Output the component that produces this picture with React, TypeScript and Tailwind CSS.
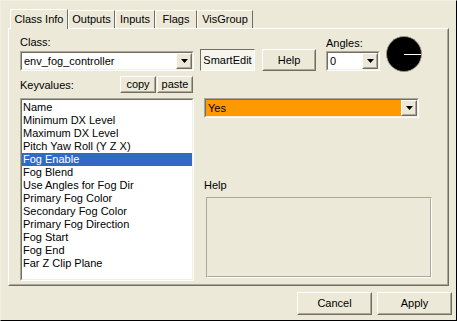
import React from "react";

const keyvalues = [
  "Name",
  "Minimum DX Level",
  "Maximum DX Level",
  "Pitch Yaw Roll (Y Z X)",
  "Fog Enable",
  "Fog Blend",
  "Use Angles for Fog Dir",
  "Primary Fog Color",
  "Secondary Fog Color",
  "Primary Fog Direction",
  "Fog Start",
  "Fog End",
  "Far Z Clip Plane",
];

const tabs = [
  { label: "Class Info", w: "w-[58px]" },
  { label: "Outputs", w: "w-[47px]" },
  { label: "Inputs", w: "w-[40px]" },
  { label: "Flags", w: "w-[42px]" },
  { label: "VisGroup", w: "w-[56px]" },
];

// classic raised 3d button
const Raised = ({
  className,
  children,
}: {
  className?: string;
  children?: React.ReactNode;
}) => (
  <div
    className={
      "border border-t-white border-l-white border-r-[#716F64] border-b-[#716F64] bg-[#ECE9D8] " +
      (className || "")
    }
  >
    <div className="w-full h-full flex items-center justify-center border border-t-[#ECE9D8] border-l-[#ECE9D8] border-r-[#ACA899] border-b-[#ACA899]">
      {children}
    </div>
  </div>
);

const Sunken = ({
  className,
  children,
}: {
  className?: string;
  children?: React.ReactNode;
}) => (
  <div
    className={
      "border border-t-[#ACA899] border-l-[#ACA899] border-r-white border-b-white " +
      (className || "")
    }
  >
    <div className="w-full h-full border border-t-[#716F64] border-l-[#716F64] border-r-[#F1EFE2] border-b-[#F1EFE2]">
      {children}
    </div>
  </div>
);

const Arrow = () => (
  <Raised className="w-[16px] h-[16px] shrink-0">
    <svg width="7" height="4" viewBox="0 0 7 4">
      <path d="M0 0h7L3.5 4z" fill="#000" />
    </svg>
  </Raised>
);

const Combo = ({
  value,
  className,
  bg,
}: {
  value: string;
  className?: string;
  bg?: string;
}) => (
  <Sunken className={className}>
    <div className={"flex h-full items-center " + (bg || "bg-white")}>
      <span className="flex-1 pl-[2px] leading-none">{value}</span>
      <Arrow />
    </div>
  </Sunken>
);

export default function App() {
  return (
    <div
      className="w-[457px] h-[321px] bg-[#ECE9D8] text-[11px] text-black border-r border-b border-r-black border-b-black border-t border-l border-t-[#F1EFE2] border-l-[#F1EFE2] overflow-hidden"
      style={{ fontFamily: '"Liberation Sans", Arial, sans-serif' }}
    >
      {/* tab strip */}
      <div className="flex items-end pl-[9px] pt-[7px] h-[27px]">
        {tabs.map((t, i) =>
          i === 0 ? (
            <div
              key={t.label}
              className={
                t.w +
                " h-[20px] flex items-center justify-center border-t border-l border-r border-t-white border-l-white border-r-[#716F64] bg-[#ECE9D8] relative z-10 -mb-[1px]"
              }
            >
              {t.label}
            </div>
          ) : (
            <div
              key={t.label}
              className={
                t.w +
                " h-[18px] flex items-center justify-center border-t border-l border-r border-t-white border-l-white border-r-[#716F64]"
              }
            >
              {t.label}
            </div>
          )
        )}
      </div>

      {/* tab panel */}
      <div className="mx-[7px] h-[258px] border border-t-white border-l-white border-r-[#716F64] border-b-[#716F64]">
        <div className="h-full border border-transparent border-r-[#ACA899] border-b-[#ACA899] pl-[10px] pt-[4px]">
          <div className="grid grid-cols-[174px_1fr] grid-rows-[37px_auto] gap-x-[6px]">
            {/* class */}
            <div className="flex flex-col">
              <div className="h-[14px] mt-[1px] leading-[14px]">Class:</div>
              <Combo value="env_fog_controller" className="h-[20px] mt-[2px]" />
            </div>
            <div className="flex items-start h-[37px]">
              <div className="mt-[15px] w-[55px] h-[22px] border border-t-[#716F64] border-l-[#716F64] border-r-white border-b-white bg-[#F6F5EE] flex items-center justify-center">
                SmartEdit
              </div>
              <Raised className="mt-[15px] ml-[7px] w-[54px] h-[22px]">Help</Raised>
              <div className="ml-[10px] flex flex-col">
                <div className="h-[14px] mt-[2px] leading-[14px]">Angles:</div>
                <Combo value="0" className="w-[54px] h-[20px] mt-[1px]" />
              </div>
              <svg width="36" height="36" viewBox="0 0 36 36" className="ml-[6px] mt-[2px] shrink-0">
                <circle cx="18" cy="18" r="17.5" fill="#000" stroke="#9a988c" strokeWidth="0.8" />
                <line x1="18" y1="18.5" x2="35" y2="18.5" stroke="#fff" strokeWidth="1" />
              </svg>
            </div>

            {/* keyvalues */}
            <div className="flex flex-col mt-[5px]">
              <div className="flex items-end h-[17px]">
                <span className="flex-1 leading-[14px] mb-[1px]">Keyvalues:</span>
                <Raised className="w-[36px] h-[17px]">copy</Raised>
                <Raised className="w-[36px] h-[17px] ml-[1px] mr-[1px]">paste</Raised>
              </div>
              <Sunken className="h-[183px] mt-[5px]">
                <div className="h-full bg-white pt-[1px]">
                  {keyvalues.map((k) =>
                    k === "Fog Enable" ? (
                      <div
                        key={k}
                        className="h-[13px] leading-[13px] pl-[1px] bg-[#316AC5] text-white"
                      >
                        {k}
                      </div>
                    ) : (
                      <div key={k} className="h-[13px] leading-[13px] pl-[1px]">
                        {k}
                      </div>
                    )
                  )}
                </div>
              </Sunken>
            </div>
            <div className="flex flex-col mt-[27px] pl-[4px]">
              <Combo value="Yes" bg="bg-[#FF9900]" className="w-[215px] h-[20px]" />
              <div className="mt-[60px] h-[14px] leading-[14px]">Help</div>
              <div className="mt-[5px] ml-[2px] w-[226px] h-[81px] border border-t-[#ACA899] border-l-[#ACA899] border-r-white border-b-white">
                <div className="w-full h-full border border-t-transparent border-l-transparent border-r-[#ACA899] border-b-[#ACA899]"></div>
              </div>
            </div>
          </div>
        </div>
      </div>

      {/* bottom buttons */}
      <div className="flex justify-end pr-[4px] pt-[6px] gap-[5px]">
        <Raised className="w-[75px] h-[23px]">Cancel</Raised>
        <Raised className="w-[75px] h-[23px]">Apply</Raised>
      </div>
    </div>
  );
}
